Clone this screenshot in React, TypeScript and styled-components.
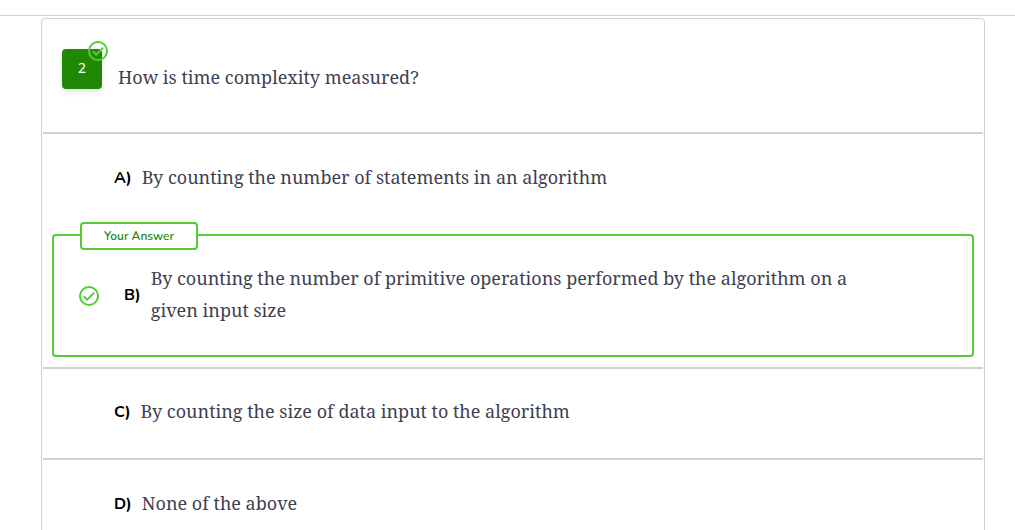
import React from "react";
import styled, { createGlobalStyle } from "styled-components";

const GREEN = "#53cc34";
const LINE = "#d0d0d6";

const GlobalStyle = createGlobalStyle`
  * { box-sizing: border-box; }
  body {
    margin: 0;
    background: #fff;
    overflow: hidden;
    font-family: Nunito, Lato, "Noto Sans", sans-serif;
  }
`;

const Page = styled.main`
  margin-top: 15px;
  padding: 2px 30px 0 41px;
  border-top: 1px solid #d0d0d0;
`;

const Card = styled.section`
  border: 1px solid #d0d0d0;
  border-radius: 4px;
`;

const Header = styled.header`
  display: flex;
  align-items: flex-start;
  gap: 16px;
  height: 115px;
  margin: 0 1px;
  padding: 30px 19px 0;
  border-bottom: 2px solid ${LINE};
`;

const Badge = styled.div`
  position: relative;
  flex: none;
  width: 40px;
  height: 40px;
  border-radius: 4px;
  background: #218806;
  color: #fff;
  font: 14px/38px "Noto Sans", sans-serif;
  text-align: center;
  box-shadow: 0 3px 6px rgba(0, 0, 0, 0.1);
`;

const BadgeMark = styled.span`
  position: absolute;
  top: -8px;
  right: -6px;
  display: flex;
`;

const Text = styled.p`
  margin: 0;
  color: #3f3f52;
  font: 18px/32px "Noto Serif", "Droid Serif", "DejaVu Serif", serif;
`;

const Question = styled(Text)`
  padding-top: 12px;
`;

const Answers = styled.ol`
  list-style: none;
  margin: 0 1px;
  padding: 0;
`;

const Answer = styled.li`
  display: flex;
  align-items: center;
  gap: 10px;
  min-height: 91px;
  padding: 0 71px 6px;
  border-bottom: 2px solid ${LINE};

  &:last-child {
    border-bottom: 0;
  }
`;

const OpenAnswer = styled(Answer)`
  min-height: 90px;
  padding-bottom: 4px;
  border-bottom: 0;
`;

const ChosenRow = styled.li`
  padding: 10px 9px;
  border-bottom: 2px solid ${LINE};
`;

const Chosen = styled.div`
  position: relative;
  display: flex;
  align-items: center;
  min-height: 123px;
  padding: 0 100px 0 25px;
  border: 2px solid ${GREEN};
  border-radius: 4px;
`;

const ChosenContent = styled.div`
  display: flex;
  align-items: center;
  gap: 10px;
  margin-left: 25px;
  padding-bottom: 4px;
`;

const Tag = styled.span`
  position: absolute;
  top: -14px;
  left: 26px;
  width: 118px;
  border: 2px solid ${GREEN};
  border-radius: 4px;
  background: #fff;
  color: #218806;
  font-size: 12px;
  line-height: 24px;
  font-weight: 600;
  text-align: center;
`;

const Letter = styled.span`
  flex: none;
  padding-top: 2px;
  color: #000;
  font-size: 16px;
  line-height: 32px;
  font-weight: 700;
`;

const CheckIcon = styled.svg`
  flex: none;
  width: 20px;
  height: 20px;
  fill: none;
  stroke: ${GREEN};
  stroke-width: 2px;
`;

const Check = () => (
  <CheckIcon viewBox="0 0 20 20" aria-hidden="true">
    <circle cx="10" cy="10" r="9" />
    <path d="M4.8 10.2 8.2 13.6 15.2 6.6" />
  </CheckIcon>
);

export default function App() {
  return (
    <Page>
      <GlobalStyle />
      <Card>
        <Header>
          <Badge>
            2
            <BadgeMark><Check /></BadgeMark>
          </Badge>
          <Question as="h1">How is time complexity measured?</Question>
        </Header>
        <Answers>
          <OpenAnswer>
            <Letter>A)</Letter>
            <Text>By counting the number of statements in an algorithm</Text>
          </OpenAnswer>
          <ChosenRow>
            <Chosen>
              <Tag>Your Answer</Tag>
              <Check />
              <ChosenContent>
                <Letter>B)</Letter>
                <Text>By counting the number of primitive operations performed by the algorithm on a given input size</Text>
              </ChosenContent>
            </Chosen>
          </ChosenRow>
          <Answer>
            <Letter>C)</Letter>
            <Text>By counting the size of data input to the algorithm</Text>
          </Answer>
          <Answer>
            <Letter>D)</Letter>
            <Text>None of the above</Text>
          </Answer>
        </Answers>
      </Card>
    </Page>
  );
}
